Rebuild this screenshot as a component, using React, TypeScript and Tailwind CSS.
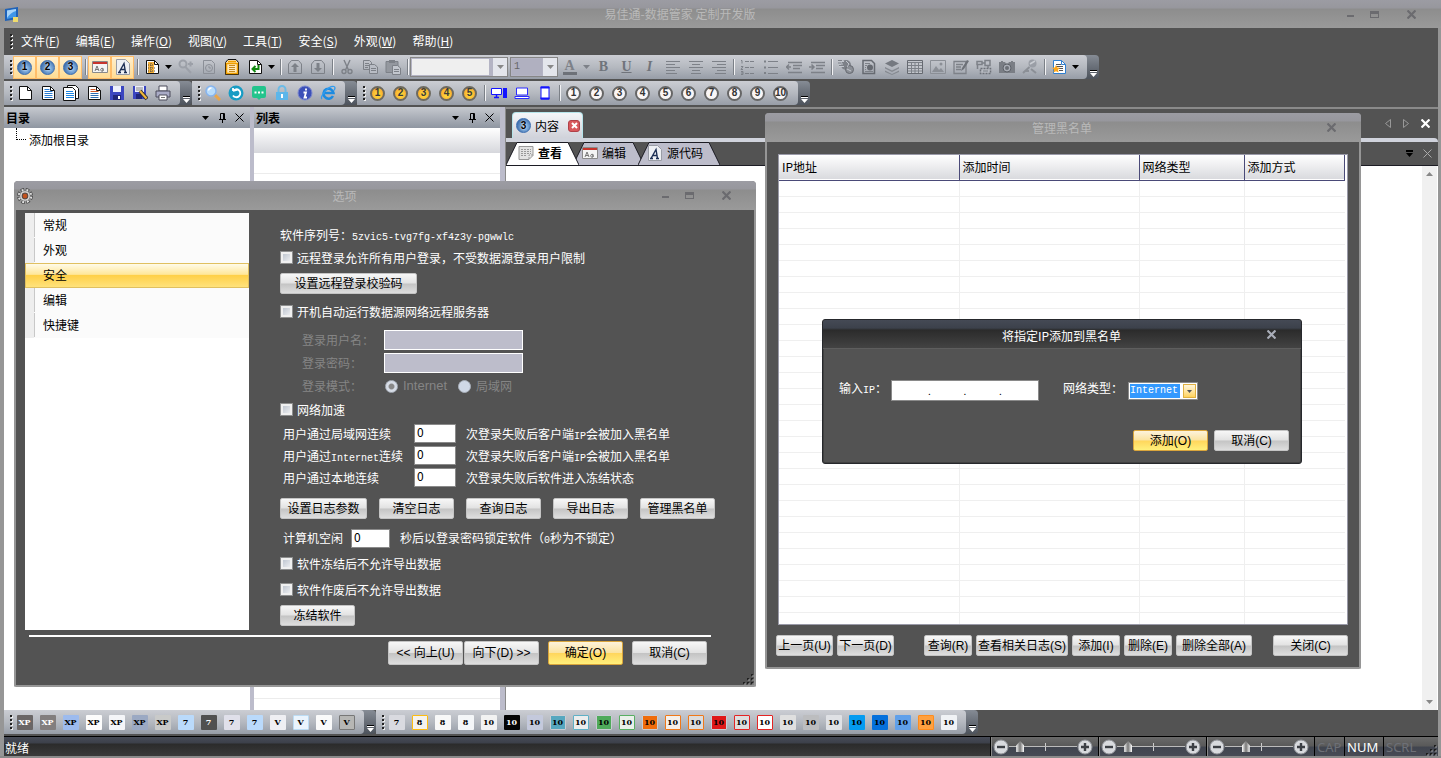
import type { ReactNode } from 'react'

const UI = "font-['Noto_Sans_CJK_SC',sans-serif]"
const BTN_FONT = "font-['Liberation_Sans','Noto_Sans_CJK_SC',sans-serif]"
const MONO = "font-['Liberation_Mono',monospace] text-[10px] leading-none"

/* ---------- icons ---------- */

const Svg = ({ children, size = 'size-4' }: { children: ReactNode; size?: string }) => (
  <svg viewBox="0 0 16 16" className={`${size} shrink-0`} fill="none" aria-hidden="true">
    {children}
  </svg>
)

const Page = ({ edge = '#111', fill = '#fff', children }: { edge?: string; fill?: string; children?: ReactNode }) => (
  <Svg>
    <path d="M2.5 1.5h8l4 4v9h-12z" fill={fill} stroke={edge} />
    <path d="M10.5 1.5v4h4" stroke={edge} />
    {children}
  </Svg>
)

const Ball = ({ n, tone }: { n: number; tone: 'blue' | 'gold' | 'white' }) => {
  const tones = {
    blue: 'bg-radial-[at_60%_60%] from-[#9cc8f0] to-[#1d4f96] text-black border-[#3a6db0] border [text-shadow:0_0_2px_#fff]',
    gold: 'bg-radial-[at_50%_60%] from-[#ffe23c] to-[#f79a2c] text-[#3a3a3a] border-[#6d6a60] border-2',
    white: 'bg-[#faf6f6] text-[#333] border-[#666] border-2',
  }
  return (
    <span
      className={`flex size-[15px] items-center justify-center rounded-full font-['Liberation_Sans',sans-serif] text-[10px] leading-none font-bold ${tones[tone]}`}
    >
      {n}
    </span>
  )
}

const G = '#7d8188'

const icons: Record<string, ReactNode> = {
  fontCard: (
    <Svg>
      <path d="M.5 2.5h15v11H.5z" fill="#f4f4f4" stroke="#8a8a8a" />
      <path d="M1 3h14v2H1z" fill="#c8342c" />
      <path d="M3 12l2-5 2 5M3.600 10.500h2.800M11 9.500a1.500 1.500 0 1 0 0 2.500zv2.500" stroke="#777" />
    </Svg>
  ),
  letterA: (
    <Svg>
      <path d="M1.500.5h9l4 4v11h-13z" fill="#eef0f4" stroke="#9a9da6" />
      <path d="M4 13.500l5-9 1.500 9M6 10.500h4M3 13.500h3M9 13.500h3" stroke="#1d2f55" strokeWidth="1.400" />
    </Svg>
  ),
  pageOrange: (
    <Page>
      <path d="M4 3h6v11H4z" fill="#f7b23b" />
      <path d="M7 4v10M4 6h5M4 9h8M4 12h8" stroke="#4d4d4d" strokeDasharray="1 1" />
    </Page>
  ),
  keyPlus: (
    <Svg>
      <circle cx="5" cy="5" r="3.500" stroke="#9ca0a8" strokeWidth="2" />
      <path d="M7.500 8l5.500 6M10 5h5M12.500 2.500v5" stroke="#9ca0a8" strokeWidth="2" />
    </Svg>
  ),
  pageClock: (
    <Svg>
      <path d="M2.500 1.500h8l3 3v10h-11z" stroke="#8b8f97" />
      <circle cx="8" cy="9" r="3.500" stroke="#8b8f97" />
      <path d="M8 7v2h2" stroke="#8b8f97" />
    </Svg>
  ),
  clipOrange: (
    <Svg>
      <path d="M4 .5h8l2.500 3v12h-13v-12z" fill="#ffe9ba" stroke="#111" />
      <path d="M4 2.500h8M2.500 4.500h11v10h-11z" stroke="#f0a000" strokeWidth="1.500" />
      <path d="M5 6.500h6M5 8.500h6M5 10.500h6M5 12.500h6" stroke="#c58a20" />
    </Svg>
  ),
  pageReturn: (
    <Page>
      <path d="M11.500 6v4H6M8.500 7L5.500 10l3 3" stroke="#138a13" strokeWidth="2" />
    </Page>
  ),
  pageUp: (
    <Svg>
      <path d="M1.500 5l3-3.500h7l3 3.500v9.500h-13z" stroke={G} />
      <path d="M8 4l4 4H9.500v5h-3V8H4z" fill={G} />
    </Svg>
  ),
  pageDown: (
    <Svg>
      <path d="M1.500 5l3-3.500h7l3 3.500v9.500h-13z" stroke={G} />
      <path d="M8 13l4-4H9.500V4h-3v5H4z" fill={G} />
    </Svg>
  ),
  cut: (
    <Svg>
      <path d="M5 1l4.500 10M11 1L6.500 11" stroke={G} strokeWidth="1.400" />
      <circle cx="5" cy="12.500" r="2" stroke={G} strokeWidth="1.400" />
      <circle cx="11" cy="12.500" r="2" stroke={G} strokeWidth="1.400" />
    </Svg>
  ),
  copy: (
    <Svg>
      <path d="M1.500 1.500h6l2 2v7h-8zM3 4.500h4M3 6.500h4M3 8.500h3" stroke={G} />
      <path d="M7.500 5.500h5l3 2.500v6.500h-8z" fill="#b9bdc5" stroke={G} />
      <path d="M9 9.500h5M9 11.500h5" stroke={G} />
    </Svg>
  ),
  paste: (
    <Svg>
      <path d="M1 2.500h12v11H1z" fill="#94989f" stroke={G} />
      <path d="M4 1h6v3H4z" fill={G} />
      <path d="M7.500 6.500h5l3 2.500v6.500h-8z" fill="#c3c7ce" stroke={G} />
      <path d="M9 10.500h5M9 12.500h5" stroke={G} />
    </Svg>
  ),
  alignLeft: <Svg><path d="M1 2.500h14M1 5.500h9M1 8.500h14M1 11.500h9M1 14.500h11" stroke={G} /></Svg>,
  alignCenter: <Svg><path d="M1 2.500h14M4 5.500h8M1 8.500h14M4 11.500h8M3 14.500h10" stroke={G} /></Svg>,
  alignRight: <Svg><path d="M1 2.500h14M6 5.500h9M1 8.500h14M6 11.500h9M4 14.500h11" stroke={G} /></Svg>,
  listNum: (
    <Svg>
      <path d="M5 2.500h10M5 8.500h10M5 14.500h10" stroke={G} strokeDasharray="4 1" />
      <path d="M1 1.500h1v3M1 7.500h2l-2 3h2M1 12.500h2v3H1M1 14h2" stroke={G} />
    </Svg>
  ),
  listDot: (
    <Svg>
      <path d="M5 2.500h10M5 8.500h10M5 14.500h10" stroke={G} />
      <path d="M1 1.500h2v2H1zM1 7.500h2v2H1zM1 13h2v2H1z" fill={G} />
    </Svg>
  ),
  outdent: (
    <Svg>
      <path d="M2 3.500h14M7 6.500h9M7 9.500h7M2 13.500h14" stroke={G} strokeWidth="1.500" />
      <path d="M0 8h5M3 5.500L.5 8 3 10.500" stroke={G} strokeWidth="1.500" />
    </Svg>
  ),
  indent: (
    <Svg>
      <path d="M2 3.500h14M7 6.500h9M7 9.500h7M2 13.500h14" stroke={G} strokeWidth="1.500" />
      <path d="M0 8h5M2.500 5.500L5 8l-2.500 2.500" stroke={G} strokeWidth="1.500" />
    </Svg>
  ),
  globeLink: (
    <Svg>
      <circle cx="8" cy="6" r="5" fill={G} />
      <circle cx="11.500" cy="10.500" r="4" fill="#8b8f96" stroke="#666a71" />
      <path d="M0 2.500h6M0 5h5M1 7.500h5M8 2l3 3-2 3M9 10l4 2" stroke="#c3c7ce" />
      <path d="M0 1.500h4M0 4h3M1 6.500h3" stroke={G} />
    </Svg>
  ),
  pageGlobe: (
    <Svg>
      <path d="M2 1.500h8.500l3 3v10H2z" stroke="#666a71" strokeWidth="1.500" />
      <path d="M4 4.500h5M4 6.500h2M4 8.500h1M4 10.500h1M4 12.500h8" stroke={G} />
      <circle cx="9" cy="8.500" r="3" fill="#666a71" />
    </Svg>
  ),
  layers: (
    <Svg>
      <path d="M8 1l7 3.500-7 3.500-7-3.500z" fill="#757980" />
      <path d="M1 8l7 3.500L15 8v1.500L8 13 1 9.500zM1 11.500L8 15l7-3.500V13L8 16l-7-3z" fill="#858990" />
    </Svg>
  ),
  table: (
    <Svg>
      <path d="M.5 1.500h15v13H.5z" fill="#c3c6cc" stroke="#666a71" />
      <path d="M1 3.500h14M1 6.500h14M1 9.500h14M1 12h14M4.500 3v11M8 3v11M11.500 3v11" stroke={G} />
    </Svg>
  ),
  image: (
    <Svg>
      <path d="M.5 1.500h15v13H.5z" stroke="#8b8f96" />
      <path d="M2 13l4-6 3 4 2-2 3 4z" fill="#8b8f96" />
      <circle cx="11" cy="5" r="1.500" fill="#8b8f96" />
    </Svg>
  ),
  pagePen: (
    <Svg>
      <path d="M1 2.500h12v12H1zM3 5.500h7M3 8h5M3 10.500h5" stroke={G} strokeWidth="1.300" />
      <path d="M8 12l1-3 5-8 2 1-5 8z" fill="#6d7178" />
    </Svg>
  ),
  flow: (
    <Svg>
      <path d="M1 2.500h5v3H1zM9 1.500h5v5H9zM1.500 6v4M6 4h3M12 7v2" stroke={G} strokeWidth="1.500" />
      <path d="M4.500 9.500h10v5h-10z" fill="#b7bbc2" stroke="#6d7178" strokeWidth="1.500" strokeDasharray="2 1" />
      <path d="M7 12h5" stroke={G} />
    </Svg>
  ),
  camera: (
    <Svg>
      <path d="M0 3h2V2h2v1h2l1 1.500h2L10 3h2V2h2v1h2v11H0z" fill="#7a7e85" />
      <circle cx="8" cy="9" r="4" fill="#a9adb5" stroke="#5e6269" />
      <circle cx="8" cy="9" r="2" fill="#6b6f76" />
    </Svg>
  ),
  tool: (
    <Svg>
      <circle cx="10.500" cy="4.500" r="4" fill="#9a9ea6" />
      <path d="M8 5l5-3" stroke="#c9ccd2" strokeWidth="1.500" />
      <path d="M7.500 8l-6.500 6M3 12h4M9 10l5 4" stroke="#8b8f96" strokeWidth="2" />
    </Svg>
  ),
  pageStar: (
    <Page edge="#2f7fd0">
      <path d="M5 5.500h5M5 7.500h7M8 9.500h4M8 11.500h4" stroke="#555" />
      <path d="M5 6l1.200 2.500 2.800.3-2 2 .6 2.700L5 12.200 2.400 13.500 3 10.800l-2-2 2.800-.3z" fill="#ffa71a" />
    </Page>
  ),
  pageNew: <Page />,
  pageLines: <Page><path d="M4.500 4.500h5M4.500 6.500h8M4.500 8.500h8M4.500 10.500h8M4.500 12.500h8" stroke="#2c7cd0" /></Page>,
  pages: (
    <Svg>
      <path d="M4.500.5h8l3 3v10h-11z" fill="#fff" stroke="#111" />
      <path d="M.5 2.500h9l3 3v10H.5z" fill="#fff" stroke="#111" />
      <path d="M3 6.500h7M3 8.500h8M3 10.500h8M3 12.500h8" stroke="#1f86e0" />
    </Svg>
  ),
  pageText: (
    <Page>
      <path d="M4.500 4.500h5M4.500 6.500h8" stroke="#d05a2c" />
      <path d="M4.500 8.500h8M4.500 10.500h8M4.500 12.500h8" stroke="#2c6cb0" />
    </Page>
  ),
  save: (
    <Svg>
      <path d="M1 1h14v14H1z" fill="#3b46c0" />
      <path d="M4 1h8v6H4z" fill="#eef0fb" />
      <path d="M4 10h8v5H4z" fill="#20267a" />
      <path d="M9 11h2v3H9z" fill="#fff" />
    </Svg>
  ),
  saveAs: (
    <Svg>
      <path d="M1 1h13v13H1z" fill="#3b46c0" />
      <path d="M3 1h9v6H3z" fill="#eef0fb" />
      <path d="M4 3h7M4 5h7" stroke="#888" />
      <path d="M4 9h6v5H4z" fill="#20267a" />
      <path d="M8 6l7 8" stroke="#333" strokeWidth="4" />
      <path d="M8 6l6.500 7.500" stroke="#f2b73a" strokeWidth="2" />
    </Svg>
  ),
  print: (
    <Svg>
      <path d="M4 1h8v5H4z" fill="#fff" stroke="#4a4a5a" />
      <path d="M1 6h14v6H1z" fill="#a9abc6" stroke="#4a4a5a" />
      <path d="M4 10h8v5H4z" fill="#fff" stroke="#4a4a5a" />
      <path d="M6 12.500h4" stroke="#777" />
    </Svg>
  ),
  search: (
    <Svg>
      <path d="M10 10l5 5" stroke="#e8a64c" strokeWidth="3" />
      <circle cx="6" cy="6" r="5" fill="#b8dcfb" stroke="#86b4ee" strokeWidth="1.500" />
      <path d="M3.500 5.500a3 3 0 0 1 3-2.500" stroke="#fff" strokeWidth="1.500" />
    </Svg>
  ),
  refresh: (
    <Svg>
      <circle cx="8" cy="8" r="7.500" fill="#189cc4" />
      <path d="M5 6a4 4 0 1 1 0 4.500M5 6l4-1M5 6V3" stroke="#fff" strokeWidth="1.800" />
    </Svg>
  ),
  chat: (
    <Svg>
      <path d="M3 1h10a2 2 0 0 1 2 2v8a2 2 0 0 1-2 2h-3l-2 2-2-2H3a2 2 0 0 1-2-2V3a2 2 0 0 1 2-2z" fill="#22c48c" />
      <path d="M3.500 6.500h2v2h-2zM7 6.500h2v2H7zM10.500 6.500h2v2h-2z" fill="#fff" />
    </Svg>
  ),
  lock: (
    <Svg>
      <path d="M4.500 8V4.500a3.500 3.500 0 0 1 7 0V8" stroke="#6cbbe6" strokeWidth="2" />
      <path d="M2 7h12v8H2z" fill="#5cb6ea" />
      <path d="M7 9h2v4H7z" fill="#fff" />
    </Svg>
  ),
  info: (
    <Svg>
      <circle cx="8" cy="8" r="7" fill="#3c50b8" stroke="#7b88cf" />
      <path d="M9 3.500v2M6.500 7.500H9L7.500 12.500h2.500" stroke="#fff" strokeWidth="1.800" />
    </Svg>
  ),
  ie: (
    <Svg>
      <path d="M13 11a5 5 0 1 1 .5-3H5" stroke="#1d8be0" strokeWidth="2.500" />
      <path d="M2 14C-1 12 9 0 14 1.500c1.500.5 1 2.500 0 4" stroke="#2f9cf0" strokeWidth="1.300" />
    </Svg>
  ),
  desktop: (
    <Svg>
      <path d="M.5 3.500h10v6H.5z" fill="#fff" stroke="#1414ff" />
      <path d="M3 12.500h5M5.500 10v2" stroke="#1414ff" strokeWidth="1.500" />
      <path d="M12 3h4v10h-4z" fill="#1414ff" />
    </Svg>
  ),
  laptop: (
    <Svg>
      <path d="M2.500 3h11v7h-11z" fill="#fff" stroke="#2c2cff" />
      <path d="M1 11.500h14v2H1z" fill="#fff" stroke="#2c2cff" />
    </Svg>
  ),
  phone: (
    <Svg>
      <path d="M4 2h8v12H4z" fill="#fff" stroke="#1414ff" />
      <path d="M3.500 2.500h9M3.500 13.500h9" stroke="#1414ff" strokeWidth="2" />
    </Svg>
  ),
  memo: (
    <Svg>
      <path d="M1 1.500h14v9l-4 4H1z" fill="#e3e3e3" stroke="#999" />
      <path d="M3 4.500h10M3 6.500h10M3 8.500h10M3 10.500h6M11 14v-4h4" stroke="#999" strokeDasharray="2 1" />
    </Svg>
  ),
}

const Caret = ({ color = '#000' }: { color?: string }) => (
  <svg viewBox="0 0 7 4" className="h-1 w-[7px] shrink-0" aria-hidden="true"><path d="M0 0h7L3.500 4z" fill={color} /></svg>
)

const Pin = () => (
  <svg viewBox="0 0 9 10" className="h-2.5 w-[9px]" fill="none" aria-hidden="true">
    <path d="M2.500 6V.5h4V6M5.500 0v6M1 6.500h7M4.500 7v3" stroke="#000" />
  </svg>
)

const Cross = ({ color = '#000', thick = false }: { color?: string; thick?: boolean }) => (
  <svg viewBox="0 0 9 9" className="size-[9px]" fill="none" aria-hidden="true">
    <path d="M.5.5l8 8M8.500.5l-8 8" stroke={color} strokeWidth={thick ? 2.2 : 1} />
  </svg>
)

const SizeGrip = ({ color }: { color: string }) => (
  <svg viewBox="0 0 12 12" className="size-3" aria-hidden="true">
    <path d="M9 1h2v2H9zM5 5h2v2H5zM9 5h2v2H9zM1 9h2v2H1zM5 9h2v2H5zM9 9h2v2H9z" fill={color} />
    <path d="M10 2h2v2h-2zM6 6h2v2H6zM10 6h2v2h-2zM2 10h2v2H2zM6 10h2v2H6zM10 10h2v2h-2z" fill="#bbb" opacity=".4" />
  </svg>
)

/* ---------- toolbars ---------- */

const Grip = () => (
  <span className="flex w-[9px] shrink-0 flex-col items-center gap-[2px] pl-1">
    {[0, 1, 2, 3].map((i) => (
      <i key={i} className="size-[2px] bg-[#222] shadow-[1px_1px_0_#eee]" />
    ))}
  </span>
)

const Sep = () => (
  <span className="flex w-1.5 shrink-0 justify-center">
    <i className="h-4 w-px bg-[#7b8087] shadow-[1px_0_0_#f2f2f4]" />
  </span>
)

const Tool = ({ label, on = false, children }: { label: string; on?: boolean; children: ReactNode }) => (
  <button
    type="button"
    aria-label={label}
    className={`flex h-[23px] w-[23px] shrink-0 items-center justify-center ${on ? 'border border-[#ffbd69] bg-linear-to-b from-[#fff0cf] to-[#ffdc93]' : ''}`}
  >
    {children}
  </button>
)

const DropArrow = ({ color }: { color?: string }) => (
  <button type="button" aria-label="更多选项" className="flex h-[23px] w-[11px] shrink-0 items-center justify-center">
    <Caret color={color} />
  </button>
)

const Toolbar = ({ label, children }: { label: string; children: ReactNode }) => (
  <div role="toolbar" aria-label={label} className="flex h-6 shrink-0 rounded-r bg-linear-to-b from-[#868c95] to-[#4d535c]">
    <div className="flex items-center rounded-r bg-linear-to-b from-[#cbcdd3] via-[#b5b9c0] to-[#979da7] pr-1.5">
      <Grip />
      {children}
    </div>
    <button type="button" aria-label="工具栏选项" className="flex w-3 flex-col items-center justify-end gap-px pb-0.5">
      <i className="h-0.5 w-[7px] border-b border-white bg-black" />
      <Caret color="#fff" />
    </button>
  </div>
)

const ToolCombo = ({ label, value, width, field }: { label: string; value: string; width: string; field: string }) => (
  <span className={`flex h-5 shrink-0 items-stretch border border-[#868686] bg-[#b4b4c4] ${width}`}>
    <select
      disabled
      aria-label={label}
      className={`m-px min-w-0 flex-1 appearance-none pl-0.5 text-[#666] ${MONO} ${field}`}
    >
      <option>{value}</option>
    </select>
    <span className="flex w-[14px] items-center justify-center bg-[#e4e6ec]">
      <Caret color="#888" />
    </span>
  </span>
)

/* ---------- windows ---------- */

const WindowControls = ({ full = false, color = '#6b6b6f' }: { full?: boolean; color?: string }) => (
  <div className="flex h-7 items-center pr-[5px]">
    {full && (
      <>
        <button type="button" aria-label="最小化" className="flex w-6 items-center justify-center pt-1">
          <i className="h-0.5 w-[7px] bg-[#6b6b6f]" />
        </button>
        <button type="button" aria-label="最大化" className="flex w-6 items-center justify-center">
          <i className="h-[7px] w-[9px] border border-t-3 border-[#6b6b6f]" />
        </button>
      </>
    )}
    <button type="button" aria-label="关闭" className="flex w-[50px] items-center justify-center">
      <Cross color={color} thick />
    </button>
  </div>
)

const inactiveBar = 'bg-[linear-gradient(#9c9ca3_0px,#97979d_8px,#8d8d8d_9px,#9a9a9a_100%)]'

interface DialogProps {
  title: string
  icon?: ReactNode
  full?: boolean
  className: string
  children: ReactNode
}

const Dialog = ({ title, icon, full, className, children }: DialogProps) => (
  <section role="dialog" aria-label={title} className={`absolute rounded-t-[4px] rounded-b-[2px] border-2 border-t-0 border-[#969696] bg-[#535353] ${className}`}>
    <header className={`-mx-0.5 flex h-[29px] items-start rounded-t-[4px] ${inactiveBar}`}>
      <span className={`flex h-[29px] shrink-0 items-center justify-center ${icon ? 'w-[22px]' : 'w-[53px]'}`}>{icon}</span>
      <h2 className="flex-1 text-center text-xs leading-[30px] text-[#b9b9b9]">{title}</h2>
      <WindowControls full={full} />
    </header>
    {children}
  </section>
)

const Btn = ({ children, width, gold = false, tall = false }: { children: ReactNode; width: string; gold?: boolean; tall?: boolean }) => (
  <button
    type="button"
    className={`flex shrink-0 items-center justify-center rounded-[2px] border text-xs whitespace-nowrap text-black ${BTN_FONT} ${width} ${tall ? 'h-6' : 'h-[21px]'} ${
      gold
        ? 'border-[#d9a53c] bg-[linear-gradient(#fdf3dc,#fbe3a0_48%,#ffd65c_52%,#fff07c)]'
        : 'border-[#c4c4c4] bg-[linear-gradient(#f7f7f7,#e2e2e2_48%,#c4c4c4_52%,#dedede)]'
    }`}
  >
    {children}
  </button>
)

const Check = ({ id, label }: { id: string; label: string }) => (
  <div className="flex h-5 items-center gap-1">
    <input
      id={id}
      type="checkbox"
      className="mb-0.5 size-[13px] appearance-none border border-[#8e8f8f] bg-linear-to-br from-[#b4bcc8] to-[#f8f8f8] shadow-[inset_0_0_0_2px_#f0f0f0]"
    />
    <label htmlFor={id}>{label}</label>
  </div>
)

const numberField = 'h-[19px] border border-[#8a8a8a] bg-white pl-0.5 pb-1 text-xs text-black'

/* ---------- options dialog ---------- */

const categories = ['常规', '外观', '安全', '编辑', '快捷键']

const failRules = [
  { id: 'lan', label: <>用户通过局域网连续</>, after: <>次登录失败后客户端<span className={MONO}>IP</span>会被加入黑名单</> },
  { id: 'net', label: <>用户通过<span className={MONO}>Internet</span>连续</>, after: <>次登录失败后客户端<span className={MONO}>IP</span>会被加入黑名单</> },
  { id: 'local', label: <>用户通过本地连续</>, after: <>次登录失败后软件进入冻结状态</> },
]

const Gear = () => (
  <Svg>
    <circle cx="8" cy="8" r="6" stroke="#4a4a4a" strokeWidth="4" strokeDasharray="3.200 1.512" />
    <circle cx="8" cy="8" r="6" stroke="#e2e2e2" strokeWidth="2.500" strokeDasharray="1.800 2.912" strokeDashoffset="-.7" />
    <circle cx="8" cy="8" r="5" fill="#e4e4e4" stroke="#8a8a8a" strokeWidth=".6" />
    <circle cx="8" cy="8" r="2.800" fill="#c4511c" stroke="#5e4a42" strokeWidth="1.200" />
  </Svg>
)

const OptionsDialog = () => (
  <Dialog title="选项" full icon={<Gear />} className="top-[181px] left-[14px] w-[742px]">
    <div className="flex pt-[3px] pl-[9px]">
      <ul className="h-[417px] w-[224px] shrink-0 bg-white text-xs text-black">
        {categories.map((name) => (
          <li
            key={name}
            className={
              name === '安全'
                ? 'h-[25px] border border-[#e0c060] bg-[linear-gradient(#fffbe8,#ffe79a_45%,#ffd048_50%,#ffe27c)]'
                : 'h-[25px] border-l-[9px] border-[#eeeeee] bg-[#fbfbfb]'
            }
          >
            <a href="#" className={name === '安全' ? 'block pl-[17px] leading-[22px]' : 'block border-l border-[#c8c8c8] pl-2 leading-6'}>
              {name}
            </a>
          </li>
        ))}
      </ul>
      <form className="flex flex-1 flex-col pt-3 pl-[31px] text-xs leading-5 text-white">
        <p className="h-5">软件序列号：<span className={MONO}>5zvic5-tvg7fg-xf4z3y-pgwwlc</span></p>
        <div className="mt-[3px]"><Check id="remote" label="远程登录允许所有用户登录，不受数据源登录用户限制" /></div>
        <div className="mt-[5px]"><Btn width="w-[137px]">设置远程登录校验码</Btn></div>
        <div className="mt-2"><Check id="boot" label="开机自动运行数据源网络远程服务器" /></div>
        <div className="mt-2 flex flex-col gap-[3px] pl-[22px] text-[#858585]">
          <div className="flex h-5 items-center">
            <label htmlFor="user" className="w-[82px]">登录用户名：</label>
            <input id="user" disabled className="h-5 w-[139px] border border-white bg-[#bdbdcb]" />
          </div>
          <div className="flex h-5 items-center">
            <label htmlFor="pass" className="w-[82px]">登录密码：</label>
            <input id="pass" type="password" disabled className="h-5 w-[139px] border border-white bg-[#bdbdcb]" />
          </div>
          <div role="radiogroup" aria-label="登录模式" className="flex h-5 items-center">
            <span className="w-[83px]">登录模式：</span>
            <input id="mode-net" type="radio" name="mode" defaultChecked disabled className="size-[13px] appearance-none rounded-full border border-[#a9b0ba] bg-radial from-[#888] from-30% to-[#d6dce6] to-45%" />
            <label htmlFor="mode-net" className={`w-[60px] pl-[5px] text-[13px] ${BTN_FONT}`}>Internet</label>
            <input id="mode-lan" type="radio" name="mode" disabled className="size-[13px] appearance-none rounded-full border border-[#a9b0ba] bg-[#cfd8e6]" />
            <label htmlFor="mode-lan" className="pl-[5px]">局域网</label>
          </div>
        </div>
        <div className="mt-1"><Check id="boost" label="网络加速" /></div>
        <div className="mt-1 flex flex-col gap-[3px] pl-[3px]">
          {failRules.map((rule) => (
            <div key={rule.id} className="flex h-[19px] items-center">
              <label htmlFor={rule.id} className="w-[131px]">{rule.label}</label>
              <input id={rule.id} defaultValue="0" className={`w-[42px] ${numberField}`} />
              <span className="pl-2.5">{rule.after}</span>
            </div>
          ))}
        </div>
        <div className="mt-[11px] flex gap-3">
          <Btn width="w-[87px]">设置日志参数</Btn>
          <Btn width="w-[75px]">清空日志</Btn>
          <Btn width="w-[75px]">查询日志</Btn>
          <Btn width="w-[75px]">导出日志</Btn>
          <Btn width="w-[75px]">管理黑名单</Btn>
        </div>
        <div className="mt-[9px] flex h-5 items-center pl-[3px]">
          <label htmlFor="idle" className="w-[68px]">计算机空闲</label>
          <input id="idle" defaultValue="0" className={`w-[39px] ${numberField}`} />
          <span className="pl-2.5">秒后以登录密码锁定软件（<span className={MONO}>0</span>秒为不锁定）</span>
        </div>
        <div className="mt-[6px]"><Check id="frozen" label="软件冻结后不允许导出数据" /></div>
        <div className="mt-[6px]"><Check id="void" label="软件作废后不允许导出数据" /></div>
        <div className="mt-[5px]"><Btn width="w-[75px]">冻结软件</Btn></div>
      </form>
    </div>
    <hr className="mt-[5px] mr-[43px] ml-[13px] border-t-2 border-white" />
    <footer className="flex items-center justify-end gap-[9px] pt-1 pr-[47px]">
      <div className="flex gap-px">
        <Btn width="w-[75px]" tall>&lt;&lt; 向上(U)</Btn>
        <Btn width="w-[75px]" tall>向下(D) &gt;&gt;</Btn>
      </div>
      <Btn width="w-[75px]" tall gold>确定(O)</Btn>
      <Btn width="w-[75px]" tall>取消(C)</Btn>
    </footer>
    <div className="flex h-5 items-end justify-end"><SizeGrip color="#222" /></div>
  </Dialog>
)

/* ---------- blacklist dialogs ---------- */

const BlacklistDialog = () => (
  <Dialog title="管理黑名单" className="top-[113px] left-[765px] w-[596px]">
    <div className="px-[11px] pt-3">
      <div className="border border-[#9a9aa8] bg-white pr-0.5">
        <table className="w-full table-fixed border-collapse text-xs text-black">
          <thead>
            <tr className="h-[25px] border-b border-[#4a4a78] bg-linear-to-b from-white to-[#d9dade]">
              <th className="w-[180px] border-r border-[#4a4a78] py-0 pl-[3px] text-left font-normal">IP地址</th>
              <th className="w-[180px] border-r border-[#4a4a78] py-0 pl-[3px] text-left font-normal">添加时间</th>
              <th className="w-[105px] border-r border-[#4a4a78] py-0 pl-[3px] text-left font-normal">网络类型</th>
              <th className="border-r border-[#4a4a78] py-0 pl-[3px] text-left font-normal">添加方式</th>
            </tr>
          </thead>
          <tbody>
            {Array.from({ length: 27 }, (_, row) => (
              <tr key={row} className="h-4 border-b border-[#efefef]">
                <td className="border-r border-[#efefef] p-0" />
                <td className="border-r border-[#efefef] p-0" />
                <td className="border-r border-[#efefef] p-0" />
                <td className="p-0" />
              </tr>
            ))}
            <tr className="h-3">
              <td className="border-r border-[#efefef] p-0" />
              <td className="border-r border-[#efefef] p-0" />
              <td className="border-r border-[#efefef] p-0" />
              <td className="p-0" />
            </tr>
          </tbody>
        </table>
      </div>
    </div>
    <footer className="flex gap-1 pt-2.5 pr-[11px] pb-[11px] pl-[9px]">
      <Btn width="w-[57px]">上一页(U)</Btn>
      <Btn width="w-[57px]">下一页(D)</Btn>
      <span className="w-[22px]" />
      <Btn width="w-[48px]">查询(R)</Btn>
      <Btn width="w-[92px]">查看相关日志(S)</Btn>
      <Btn width="w-[48px]">添加(I)</Btn>
      <Btn width="w-[48px]">删除(E)</Btn>
      <Btn width="w-[76px]">删除全部(A)</Btn>
      <span className="flex-1" />
      <Btn width="w-[75px]">关闭(C)</Btn>
    </footer>
  </Dialog>
)

const AddIpDialog = () => (
  <section role="dialog" aria-label="将指定IP添加到黑名单" className="absolute top-[319px] left-[822px] w-[480px] rounded-[3px] border border-[#26282c] bg-[#535353] shadow-[inset_0_0_0_1px_#414141]">
    <header className="flex h-[29px] items-start rounded-t-[3px] border-b border-[#5e5e5e] bg-[linear-gradient(#454a55_0px,#3c414b_8px,#2b2b2b_10px,#434343_100%)]">
      <span className="w-[54px]" />
      <h2 className="flex-1 text-center text-xs leading-[31px] text-white">将指定IP添加到黑名单</h2>
      <WindowControls color="#a9adb8" />
    </header>
    <form className="text-xs text-white">
      <div className="flex items-start pt-[31px] pl-4">
        <span className="w-[52px] leading-4">输入<span className={MONO}>IP</span>：</span>
        <div role="group" aria-label="IP地址" className="flex h-[21px] w-[148px] items-center border border-[#8a8a8a] bg-white pl-1 text-[10px] text-black">
          {[1, 2, 3, 4].map((part) => (
            <span key={part} className="flex flex-1 items-center">
              <input aria-label={`第${part}段`} className="h-4 w-full min-w-0 bg-transparent text-center outline-none" />
              {part < 4 && <span className="w-1 leading-4">.</span>}
            </span>
          ))}
        </div>
        <label htmlFor="net-type" className="ml-6 w-[65px] leading-4">网络类型：</label>
        <div className="mt-0.5 flex h-[18px] w-[70px] items-stretch border border-[#8a8a8a] bg-white p-px">
          <select id="net-type" className={`w-[50px] appearance-none bg-[#3399ff] text-white outline-none ${MONO}`}>
            <option>Internet</option>
          </select>
          <span className="ml-auto flex w-[13px] items-center justify-center border border-[#e0b040] bg-linear-to-b from-[#fff6dc] to-[#ffd35a]">
            <svg viewBox="0 0 5 3" className="h-[3px] w-[5px]" aria-hidden="true"><path d="M0 0h5L2.500 3z" fill="#555" /></svg>
          </span>
        </div>
      </div>
      <div className="flex justify-end gap-1.5 pt-[29px] pr-3 pb-3">
        <Btn width="w-[75px]" gold>添加(O)</Btn>
        <Btn width="w-[75px]">取消(C)</Btn>
      </div>
    </form>
  </section>
)

/* ---------- main window ---------- */

const menus = [
  ['文件', 'F'], ['编辑', 'E'], ['操作', 'O'], ['视图', 'V'],
  ['工具', 'T'], ['安全', 'S'], ['外观', 'W'], ['帮助', 'H'],
]

const themeA = [
  ['XP', 'bg-[#6a6666] text-white'], ['XP', 'bg-[#827e7e] text-white'], ['XP', 'bg-[#9dbbee] text-black'],
  ['XP', 'bg-[#fcfcfc] text-black'], ['XP', 'bg-[#f4f5f8] text-black'], ['XP', 'bg-[#9ba9c3] text-black'],
  ['XP', 'bg-[#c9cac9] text-black'], ['7', 'bg-[#badafb] text-black'], ['7', 'bg-[#505050] text-white'],
  ['7', 'bg-[#e0e0ea] text-black'], ['7', 'bg-[#badafb] text-black'], ['V', 'bg-[#efeff3] text-black'],
  ['V', 'border border-[#bcdcf4] bg-[#eaf4fd] text-black'], ['V', 'bg-[#fafafa] text-black'],
  ['V', 'border border-[#777] bg-[#b6b6b4] text-black'],
]

const themeB = [
  ['7', 'bg-[#d9dae0] text-black'], ['8', 'border border-[#fdbc10] bg-[#f4f2ee] text-black'],
  ['8', 'bg-[#f8f8f8] text-black'], ['8', 'bg-[#f4f6f8] text-black'], ['10', 'bg-[#f2f2f2] text-black'],
  ['10', 'bg-[#050505] text-white'], ['10', 'bg-[#c4c9dc] text-black'],
  ['10', 'border border-[#c8ccd2] bg-[#56a7bf] text-black'], ['10', 'border border-[#5fb0c6] bg-[#eceded] text-black'],
  ['10', 'border border-[#c8ccd2] bg-[#4faa5b] text-black'], ['10', 'border border-[#57ae62] bg-[#eaf0ea] text-black'],
  ['10', 'border border-[#c8ccd2] bg-[#ef6c0c] text-black'], ['10', 'border border-[#f07818] bg-[#f4efea] text-black'],
  ['10', 'border border-[#f07818] bg-[#dcdcdc] text-black'], ['10', 'border border-[#c8ccd2] bg-[#e01818] text-black'],
  ['10', 'border border-[#e42424] bg-[#dedede] text-black'], ['10', 'border border-[#e42424] bg-white text-black'],
  ['10', 'bg-[#dfdfdf] text-black'], ['10', 'bg-[#bcbdbf] text-black'], ['10', 'bg-[#dfe1e5] text-black'],
  ['10', 'bg-[#049bf0] text-black'], ['10', 'bg-[#0470dc] text-black'], ['10', 'bg-[#60a0ea] text-black'],
  ['10', 'border border-[#ff8c1c] bg-[#ffa040] text-black'], ['10', 'bg-[#f0f2f5] text-black'],
]

const ThemeChips = ({ items }: { items: string[][] }) => (
  <>
    {items.map(([text, tone], i) => (
      <Tool key={i} label={`主题 ${text}`}>
        <span className={`flex h-[15px] w-4 items-center justify-center rounded-[1px] font-['DejaVu_Serif',serif] text-[8px] leading-none font-bold ${tone}`}>
          {text}
        </span>
      </Tool>
    ))}
  </>
)

const PaneHeader = ({ title }: { title: string }) => (
  <header className="flex h-[21px] shrink-0 items-center bg-linear-to-b from-[#c6c9cf] to-[#8f96a1] pr-0.5 pl-0.5">
    <h2 className="flex-1 text-xs font-bold text-black">{title}</h2>
    <button type="button" aria-label="菜单" className="flex w-[17px] justify-center"><Caret /></button>
    <button type="button" aria-label="固定" className="flex w-[17px] justify-center"><Pin /></button>
    <button type="button" aria-label="关闭" className="flex w-[17px] justify-center"><Cross /></button>
  </header>
)

interface ViewTabProps {
  label: string
  icon: ReactNode
  active?: boolean
  width: string
  w: number
}

const ViewTab = ({ label, icon, active = false, width, w }: ViewTabProps) => (
  <button
    type="button"
    role="tab"
    aria-selected={active}
    className={`relative flex h-6 items-center gap-1 text-xs text-black ${width} ${active ? 'z-10 pl-3 font-bold' : '-ml-1.5 pl-[9px]'}`}
  >
    <svg viewBox={`0 0 ${w} 24`} className="absolute inset-0 size-full" aria-hidden="true">
      <path d={`M0 24L11 1.500H${w - 11}L${w} 24`} fill={active ? '#fff' : '#bdbdcb'} stroke="#1c1c24" />
    </svg>
    <span className="relative flex items-center gap-1">
      {icon}
      {label}
    </span>
  </button>
)

const ContentPane = () => (
  <main className="flex min-w-0 flex-1 flex-col border-t-2 border-l border-[#8a8a8a] bg-[#535353]">
    <div className="flex h-[29px] items-end justify-between">
      <div role="tablist" className="flex pl-1.5">
        <button type="button" role="tab" aria-selected="true" className="flex h-[26px] w-[71px] items-center rounded-t-[4px] border border-b-0 border-[#b5e4ea] bg-linear-to-b from-[#f4f5f8] to-[#d0d2da] pl-[3px] text-xs text-black">
          <Ball n={3} tone="blue" />
          <span className="flex-1 pl-1 text-left">内容</span>
          <i className="mr-0.5 flex size-3 items-center justify-center rounded-[3px] border border-[#b04048] bg-[#d8585c]">
            <svg viewBox="0 0 7 7" className="size-[7px]" aria-hidden="true"><path d="M1 1l5 5M6 1L1 6" stroke="#fff" strokeWidth="2" /></svg>
          </i>
        </button>
      </div>
      <div className="flex h-full items-center gap-2 pr-2">
        <svg viewBox="0 0 6 9" className="mr-1 h-[9px] w-1.5" fill="none"><path d="M5.500.5v8L.5 4.500z" stroke="#999" /></svg>
        <svg viewBox="0 0 6 9" className="mr-1 h-[9px] w-1.5" fill="none"><path d="M.5.5v8l5-4z" stroke="#999" /></svg>
        <button type="button" aria-label="关闭内容"><Cross color="#fff" thick /></button>
      </div>
    </div>
    <div className="h-1 rounded-tr bg-[#d0d3dc]" />
    <div className="flex h-6 shrink-0 items-end justify-between border-b border-[#1c1c24]">
      <div role="tablist" className="flex">
        <ViewTab label="查看" icon={icons.memo} active width="w-[73px]" w={73} />
        <ViewTab label="编辑" icon={icons.fontCard} width="w-[71px]" w={71} />
        <ViewTab label="源代码" icon={icons.letterA} width="w-[82px]" w={82} />
      </div>
      <div className="flex h-full items-center gap-2.5 pr-1.5">
        <button type="button" aria-label="窗口列表" className="flex flex-col items-center gap-px"><i className="h-0.5 w-[7px] bg-black" /><Caret /></button>
        <button type="button" aria-label="关闭视图"><Cross color="#aaa" /></button>
      </div>
    </div>
    <div className="flex flex-1 bg-white">
      <div className="flex-1" />
      <div className="mr-px flex w-[15px] flex-col items-center justify-between bg-[#f0f0f0] py-1.5">
        <span className="rotate-180"><Caret color="#888" /></span>
        <Caret color="#888" />
      </div>
    </div>
  </main>
)

const RoundSign = ({ plus = false }: { plus?: boolean }) => (
  <Svg>
    <circle cx="8" cy="8" r="7" fill="#d8dade" stroke="#8f9298" />
    <path d={plus ? 'M4 8h8M8 4v8' : 'M4 8h8'} stroke="#3c3f45" strokeWidth="2.400" />
  </Svg>
)

const Zoom = ({ label, value }: { label: string; value: number }) => (
  <div className="flex w-[108px] items-center border-l border-black pl-0.5 shadow-[inset_1px_0_0_#888]">
    <button type="button" aria-label={`${label}缩小`}><RoundSign /></button>
    <span className="relative flex w-[68px] items-center">
      <i className="absolute left-9 h-2 w-px bg-[#ccc]" />
      <input
        type="range"
        aria-label={label}
        defaultValue={value}
        className="relative h-3 w-full appearance-none bg-[linear-gradient(#bbb,#bbb)] bg-size-[100%_1px] bg-center bg-no-repeat [&::-webkit-slider-thumb]:h-[11px] [&::-webkit-slider-thumb]:w-2 [&::-webkit-slider-thumb]:appearance-none [&::-webkit-slider-thumb]:bg-linear-to-r [&::-webkit-slider-thumb]:from-white [&::-webkit-slider-thumb]:via-[#777] [&::-webkit-slider-thumb]:to-white [&::-webkit-slider-thumb]:[clip-path:polygon(50%_0,100%_40%,100%_100%,0_100%,0_40%)]"
      />
    </span>
    <button type="button" aria-label={`${label}放大`}><RoundSign plus /></button>
  </div>
)

const StatusBar = () => (
  <footer className="flex h-5 shrink-0 border-t border-black bg-[linear-gradient(#474b57_0px,#3c404a_6px,#2b2b2b_7px,#3a3a3a_100%)] text-xs text-white">
    <span className="flex-1 pl-px leading-[22px]">就绪</span>
    <div className="flex bg-[linear-gradient(#6a6a6a,#5a5a5a_45%,#41454f_55%,#474b55)] font-['Noto_Sans',sans-serif] text-[13px] leading-5">
      <Zoom label="目录" value={12} />
      <Zoom label="列表" value={12} />
      <Zoom label="内容" value={28} />
      <span className="w-[30px] border-l border-black pl-0.5 text-[#6d7077]">CAP</span>
      <span className="w-[39px] border-l border-black pl-0.5">NUM</span>
      <span className="w-[42px] border-l border-black pl-0.5 text-[#6d7077]">SCRL</span>
      <span className="flex w-[13px] items-end"><SizeGrip color="#1c1c1c" /></span>
    </div>
  </footer>
)

export default function App() {
  return (
    <div className={`relative flex h-screen flex-col overflow-hidden border-b-2 border-[#8a8a8a] bg-[#535353] ${UI}`}>
      <header className={`flex h-7 shrink-0 items-start ${inactiveBar}`}>
        <span className="flex h-7 w-[22px] items-center pt-0.5 pl-1">
          <Svg>
            <path d="M1 2l13-2v12L1 14z" fill="#1f62b8" />
            <path d="M3 3.500L12 2v8L3 12z" fill="#3f96e8" />
            <path d="M3 3.500L12 2v2C8 5 5 8 3 11z" fill="#a8d4f8" />
            <path d="M9 10h5v5H9z" fill="#f0dc6c" />
          </Svg>
        </span>
        <h1 className="flex-1 text-center text-xs leading-7 text-[#b9b9b9]">易佳通-数据管家 定制开发版</h1>
        <WindowControls full />
      </header>

      <div className="flex min-h-0 flex-1 flex-col border-r-3 border-l-4 border-[#969696]">
        <nav className="flex h-[26px] shrink-0 items-center text-xs text-white">
          <Grip />
          <div className="flex gap-4 pl-2">
            {menus.map(([name, key]) => (
              <a key={key} href="#">{name}(<u>{key}</u>)</a>
            ))}
          </div>
        </nav>

        <div className="flex flex-col gap-0.5 pt-px pb-0.5">
          <div className="flex">
            <Toolbar label="编辑工具栏">
              {[1, 2, 3].map((n) => <Tool key={n} label={`面板${n}`} on><Ball n={n} tone="blue" /></Tool>)}
              <Sep />
              <Tool label="编辑模式" on>{icons.fontCard}</Tool>
              <Tool label="源代码模式" on>{icons.letterA}</Tool>
              <Sep />
              <Tool label="页面">{icons.pageOrange}</Tool>
              <DropArrow />
              <Tool label="添加密钥">{icons.keyPlus}</Tool>
              <Tool label="历史">{icons.pageClock}</Tool>
              <Tool label="剪贴板">{icons.clipOrange}</Tool>
              <Tool label="返回">{icons.pageReturn}</Tool>
              <DropArrow />
              <Sep />
              <Tool label="上移">{icons.pageUp}</Tool>
              <Tool label="下移">{icons.pageDown}</Tool>
              <Sep />
              <Tool label="剪切">{icons.cut}</Tool>
              <Tool label="复制">{icons.copy}</Tool>
              <Tool label="粘贴">{icons.paste}</Tool>
              <Sep />
              <ToolCombo label="字体" value="" width="w-[98px]" field="bg-[#efefef] mr-1" />
              <span className="w-0.5" />
              <ToolCombo label="字号" value="1" width="w-12" field="bg-[#b0b0c0]" />
              <Tool label="文字颜色">
                <span className="flex flex-col items-center font-['Liberation_Serif',serif] text-sm leading-3 font-bold text-[#7d8188]">
                  A<i className="h-[3px] w-[14px] bg-[#6d7178]" />
                </span>
              </Tool>
              <DropArrow color="#7d8188" />
              <Tool label="粗体"><b className="font-['Liberation_Serif',serif] text-sm text-[#70747b]">B</b></Tool>
              <Tool label="下划线"><u className="font-['Liberation_Serif',serif] text-sm font-bold text-[#70747b]">U</u></Tool>
              <Tool label="斜体"><em className="font-['Liberation_Serif',serif] text-sm font-bold text-[#70747b]">I</em></Tool>
              <Tool label="左对齐">{icons.alignLeft}</Tool>
              <Tool label="居中">{icons.alignCenter}</Tool>
              <Tool label="右对齐">{icons.alignRight}</Tool>
              <Sep />
              <Tool label="编号列表">{icons.listNum}</Tool>
              <Tool label="项目列表">{icons.listDot}</Tool>
              <Tool label="减少缩进">{icons.outdent}</Tool>
              <Tool label="增加缩进">{icons.indent}</Tool>
              <Sep />
              <Tool label="超链接">{icons.globeLink}</Tool>
              <Tool label="网页">{icons.pageGlobe}</Tool>
              <Tool label="图层">{icons.layers}</Tool>
              <Tool label="表格">{icons.table}</Tool>
              <Tool label="图片">{icons.image}</Tool>
              <Tool label="便笺">{icons.pagePen}</Tool>
              <Tool label="流程图">{icons.flow}</Tool>
              <Tool label="截图">{icons.camera}</Tool>
              <Tool label="设置">{icons.tool}</Tool>
              <Sep />
              <Tool label="收藏">{icons.pageStar}</Tool>
              <DropArrow />
            </Toolbar>
          </div>
          <div className="flex">
            <Toolbar label="文件工具栏">
              <Tool label="新建">{icons.pageNew}</Tool>
              <Tool label="打开">{icons.pageLines}</Tool>
              <Tool label="全部">{icons.pages}</Tool>
              <Tool label="文本">{icons.pageText}</Tool>
              <Tool label="保存">{icons.save}</Tool>
              <Tool label="另存为">{icons.saveAs}</Tool>
              <Tool label="打印">{icons.print}</Tool>
            </Toolbar>
            <Toolbar label="常用工具栏">
              <Tool label="搜索">{icons.search}</Tool>
              <Tool label="刷新">{icons.refresh}</Tool>
              <Tool label="消息">{icons.chat}</Tool>
              <Tool label="锁定">{icons.lock}</Tool>
              <Tool label="关于">{icons.info}</Tool>
              <Tool label="浏览器">{icons.ie}</Tool>
            </Toolbar>
            <Toolbar label="布局工具栏">
              {[1, 2, 3, 4, 5].map((n) => <Tool key={n} label={`布局${n}`}><Ball n={n} tone="gold" /></Tool>)}
              <Sep />
              <Tool label="桌面">{icons.desktop}</Tool>
              <Tool label="笔记本">{icons.laptop}</Tool>
              <Tool label="手机">{icons.phone}</Tool>
              <Sep />
              {[1, 2, 3, 4, 5, 6, 7, 8, 9, 10].map((n) => <Tool key={n} label={`方案${n}`}><Ball n={n} tone="white" /></Tool>)}
            </Toolbar>
          </div>
        </div>

        <div className="flex min-h-0 flex-1">
          <aside className="flex w-[246px] shrink-0 flex-col bg-white">
            <PaneHeader title="目录" />
            <ul className="pl-3 text-xs text-black">
              <li className="flex items-start">
                <i className="h-3 w-2.5 border-b border-l border-dotted border-black" />
                <a href="#" className="pl-[3px] leading-6">添加根目录</a>
              </li>
            </ul>
          </aside>
          <div className="w-1 shrink-0 bg-[#bcbccb]" />
          <aside className="flex w-[246px] shrink-0 flex-col overflow-hidden bg-white">
            <PaneHeader title="列表" />
            <div className="h-[25px] shrink-0 bg-linear-to-b from-white to-[#d6d7dc]" />
            {Array.from({ length: 26 }, (_, row) => (
              <div key={row} className="h-[21px] shrink-0 border-b border-[#ececec]" />
            ))}
          </aside>
          <div className="w-[5px] shrink-0 bg-[#bcbccb]" />
          <ContentPane />
        </div>

        <div className="flex shrink-0 pb-0.5">
          <Toolbar label="主题工具栏一"><ThemeChips items={themeA} /></Toolbar>
          <Toolbar label="主题工具栏二"><ThemeChips items={themeB} /></Toolbar>
        </div>
        <StatusBar />
      </div>

      <OptionsDialog />
      <BlacklistDialog />
      <AddIpDialog />
    </div>
  )
}
